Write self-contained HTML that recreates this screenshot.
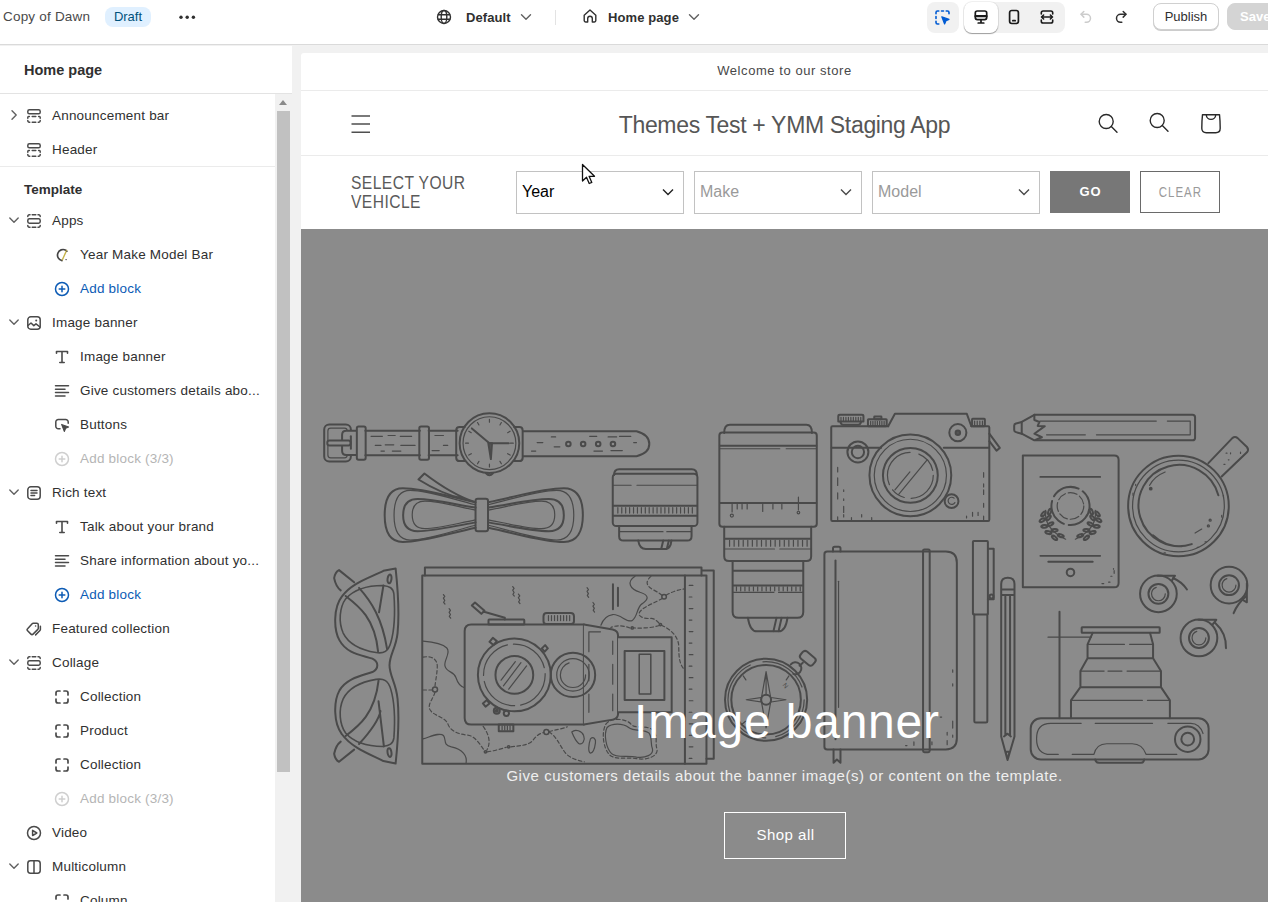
<!DOCTYPE html>
<html lang="en">
<head>
<meta charset="utf-8">
<title>Copy of Dawn - Theme editor</title>
<style>
*{box-sizing:border-box;margin:0;padding:0}
html,body{width:1268px;height:902px;overflow:hidden;background:#f1f1f1;font-family:"Liberation Sans",sans-serif;color:#303030}
body{position:relative}
.abs{position:absolute}
/* top bar */
#topbar{position:absolute;left:0;top:0;width:1268px;height:45px;background:#fff;border-bottom:1px solid #dadada;z-index:5}
#topbar .t{position:absolute;white-space:nowrap;font-size:13px;line-height:16px;color:#303030}
.badge{position:absolute;left:105px;top:7px;width:46px;height:20px;border-radius:8px;background:#e0f0ff;color:#00527c;font-size:13px;line-height:20px;text-align:center}
.btn{position:absolute;background:#fff;border:1px solid #d0d0d0;border-radius:8px;font-size:13px;text-align:center;color:#303030;box-shadow:0 1px 0 #ccc}
/* sidebar */
#side{position:absolute;left:0;top:46px;width:292px;height:856px;background:#fff;overflow:hidden}
#sidehead{position:absolute;left:0;top:0;width:292px;height:48px;border-bottom:1px solid #e3e3e3;background:#fff}
#sidehead b{position:absolute;left:24px;top:15px;font-size:14.500px;line-height:18px;color:#303030}
.row{position:absolute;left:0;height:34px;width:275px;font-size:13.5px;line-height:34px;white-space:nowrap;color:#303030}
.row .lbl{position:absolute;top:0}
.row svg{position:absolute}
.l1 .lbl{left:52px}
.l2 .lbl{left:80px}
.blue .lbl{color:#0c5bb5}
.dis .lbl{color:#b5b5b5}
.sep{position:absolute;left:0;width:275px;height:1px;background:#ebebeb}
#sb{position:absolute;left:275px;top:48px;width:17px;height:808px;background:#f1f1f1}
#sb i{position:absolute;left:2px;top:17px;width:13px;height:661px;background:#c1c1c1}
#sb:before{content:"";position:absolute;left:4px;top:6px;border:4.5px solid transparent;border-bottom:5px solid #8a8a8a;border-top:0}
/* preview */
#pv{position:absolute;left:301px;top:53px;width:967px;height:849px;background:#fff;overflow:hidden;border-radius:3px 0 0 0;font-family:"Liberation Sans",sans-serif;color:#4a4a4a}

.row .lbl{top:1px;letter-spacing:.2px}
#pv .ann{position:absolute;left:0;top:0;width:967px;height:38px;border-bottom:1px solid #ebebeb;text-align:center;font-size:13px;line-height:35px;letter-spacing:.56px;color:#484848}
#pv .hdr{position:absolute;left:0;top:38px;width:967px;height:65px;border-bottom:1px solid #ebebeb}
#pv .title{position:absolute;left:0;top:0;width:967px;text-align:center;font-size:23px;line-height:67px;letter-spacing:-.33px;color:#565656;top:1px;white-space:nowrap}
#pv .ymm{position:absolute;left:0;top:103px;width:967px;height:73px;background:#fff}
#pv .syv{position:absolute;left:50px;top:17px;font-size:18.400px;line-height:19px;letter-spacing:.5px;transform:scaleX(.85);transform-origin:0 0;color:#5a5a5a;white-space:nowrap}
#pv .sel{position:absolute;top:15px;width:168px;height:43px;border:1px solid #c2c2c2;background:#fff;font-size:16px;line-height:39px;padding-left:5px;color:#000}
#pv .sel.ph{color:#9a9a9a}
#pv .sel svg{position:absolute;right:9px;top:16px}
#pv .sel.ph svg{stroke:#4a4a4a}
#pv .go{position:absolute;top:15px;width:80px;height:42px;font-size:13px;line-height:42px;text-align:center;letter-spacing:1.500px}
#banner{position:absolute;left:0;top:176px;width:967px;height:673px;background:#8b8b8b;overflow:hidden}
#banner h2{position:absolute;left:0;width:967px;top:463px;text-align:center;font-weight:normal;font-size:48px;line-height:60px;letter-spacing:.8px;padding-left:5px;color:#fff;white-space:nowrap}
#banner p{position:absolute;left:0;width:967px;top:537px;text-align:center;font-size:15px;line-height:20px;letter-spacing:.55px;color:#efefef;white-space:nowrap}
#banner .shop{position:absolute;left:423px;top:583px;width:122px;height:47px;border:1px solid #fff;color:#fff;font-size:15px;line-height:44px;text-align:center;letter-spacing:.5px;padding-left:1px}
</style>
</head>
<body>
<div id="topbar">
<span class="t" style="left:3px;top:9px;font-size:13.500px;letter-spacing:.2px;color:#4a4a4a">Copy of Dawn</span>
<span class="badge">Draft</span>
<svg class="abs" style="left:178px;top:13px" width="18" height="8" viewBox="0 0 18 8"><circle cx="3" cy="4.300" r="1.700" fill="#303030"/><circle cx="9.200" cy="4.300" r="1.700" fill="#303030"/><circle cx="15.400" cy="4.300" r="1.700" fill="#303030"/></svg>
<svg class="abs" style="left:436px;top:9px" width="16" height="16" viewBox="0 0 16 16" fill="none" stroke="#303030" stroke-width="1.4"><circle cx="8" cy="8" r="6.5"/><ellipse cx="8" cy="8" rx="2.8" ry="6.5"/><path d="M1.8 5.8h12.4M1.8 10.2h12.4"/></svg>
<span class="t" style="left:466px;top:10px;font-weight:bold;font-size:13px;letter-spacing:.1px">Default</span>
<svg class="abs" style="left:520px;top:13px" width="12" height="8" viewBox="0 0 12 8" fill="none" stroke="#616161" stroke-width="1.4" stroke-linecap="round" stroke-linejoin="round"><path d="M1.5 1.8 6 6.2l4.5-4.4"/></svg>
<i class="abs" style="left:555px;top:10px;width:1px;height:15px;background:#e3e3e3"></i>
<svg class="abs" style="left:582px;top:8px" width="16" height="16" viewBox="0 0 16 16" fill="none" stroke="#303030" stroke-width="1.4" stroke-linejoin="round" stroke-linecap="round"><path d="M2.2 7.2 8 2l5.8 5.200v5.300a1.500 1.500 0 0 1-1.500 1.500h-2v-3.500a2.300 2.300 0 0 0-4.600 0v3.500h-2a1.500 1.500 0 0 1-1.500-1.500z"/></svg>
<span class="t" style="left:608px;top:10px;font-weight:bold;font-size:13px;letter-spacing:.1px">Home page</span>
<svg class="abs" style="left:688px;top:13px" width="12" height="8" viewBox="0 0 12 8" fill="none" stroke="#616161" stroke-width="1.4" stroke-linecap="round" stroke-linejoin="round"><path d="M1.500 1.800 6 6.200l4.500-4.400"/></svg>
<i class="abs" style="left:927px;top:2px;width:32px;height:31px;border-radius:8px;background:#f1f1f1"></i>
<svg class="abs" style="left:934px;top:9px" width="17" height="17" viewBox="0 0 17 17" fill="none" stroke="#005bd3" stroke-width="1.600" stroke-linecap="round"><path d="M2 4.800v-1.300a1.500 1.500 0 0 1 1.500-1.500h1.300M7.500 2h2M12.200 2h1.300a1.500 1.500 0 0 1 1.500 1.500v1.300M2 7.500v2M2 12.200v1.300a1.500 1.500 0 0 0 1.500 1.500h1.300"/><path d="M7.800 7.800l7.200 2.600-3 1.400-1.400 3.200z" fill="#005bd3" stroke-width="1.200" stroke-linejoin="round"/></svg>
<i class="abs" style="left:964px;top:2px;width:101px;height:31px;border-radius:8px;background:#f1f1f1"></i>
<i class="abs" style="left:964px;top:2px;width:34px;height:31px;border-radius:8px;background:#fff;box-shadow:0 1px 1px rgba(0,0,0,.35),0 0 0 1px rgba(0,0,0,.06)"></i>
<svg class="abs" style="left:973px;top:9px" width="16" height="16" viewBox="0 0 16 16" fill="none" stroke="#1a1a1a" stroke-width="1.700" stroke-linecap="round" stroke-linejoin="round"><rect x="2.300" y="2" width="11.400" height="8.600" rx="2"/><path d="M2.500 7.200h11" stroke-width="2.200"/><path d="M8 10.800v3M5.200 14h5.600"/></svg>
<svg class="abs" style="left:1006px;top:9px" width="16" height="16" viewBox="0 0 16 16" fill="none" stroke="#1a1a1a" stroke-width="1.700" stroke-linecap="round"><rect x="3.600" y="1.500" width="8.800" height="13" rx="2.200"/><path d="M6.800 11.700h2.400"/></svg>
<svg class="abs" style="left:1039px;top:9px" width="16" height="16" viewBox="0 0 16 16" fill="none" stroke="#1a1a1a" stroke-width="1.600" stroke-linecap="round" stroke-linejoin="round"><path d="M2.300 5V3.800A1.800 1.800 0 0 1 4.100 2h7.800a1.800 1.800 0 0 1 1.800 1.800V5M2.300 11v1.200A1.800 1.800 0 0 0 4.100 14h7.800a1.800 1.800 0 0 0 1.800-1.800V11"/><path d="M2.500 8h11M4.600 6 2.500 8l2.100 2M11.400 6l2.100 2-2.100 2"/></svg>
<svg class="abs" style="left:1078px;top:9px" width="16" height="16" viewBox="0 0 16 16" fill="none" stroke="#cccccc" stroke-width="1.500" stroke-linecap="round" stroke-linejoin="round"><path d="M5.800 2.500 3 5.300l2.800 2.800"/><path d="M3.200 5.300h5.300a4 4 0 0 1 0 8H7.200"/></svg>
<svg class="abs" style="left:1113px;top:9px" width="16" height="16" viewBox="0 0 16 16" fill="none" stroke="#303030" stroke-width="1.500" stroke-linecap="round" stroke-linejoin="round"><path d="M10.200 2.500 13 5.300l-2.800 2.800"/><path d="M12.800 5.300H7.500a4 4 0 0 0 0 8h1.300"/></svg>
<span class="btn" style="left:1153px;top:3px;width:66px;height:27px;line-height:25px">Publish</span>
<span class="btn" style="left:1227px;top:3px;width:60px;height:27px;line-height:25px;background:#d4d4d4;border-color:#d4d4d4;color:#fff;font-weight:bold;box-shadow:none;text-align:left;padding-left:12px">Save</span>
</div>
<div id="side">
<div class="row l1 " style="top:52px"><svg style="left:9px;top:11px" width="10" height="12" viewBox="0 0 10 12" fill="none" stroke="#616161" stroke-width="1.400" stroke-linecap="round" stroke-linejoin="round"><path d="M3 1.800 7.200 6 3 10.200"/></svg><svg style="left:26px;top:10px" width="16" height="16" viewBox="0 0 16 16" fill="none" stroke="#4a4a4a" stroke-width="1.5" stroke-linecap="round" stroke-linejoin="round"><rect x="1.800" y="1.800" width="12.400" height="4" rx="1.600"/><path d="M1.800 10.200V9.400a.8.800 0 0 1 .8-.8h.8M14.200 10.200V9.400a.8.800 0 0 0-.8-.8h-.8M6.200 8.600h3.600M1.800 12.600v.2a1.400 1.400 0 0 0 1.400 1.400h.6M14.200 12.600v.2a1.400 1.400 0 0 1-1.400 1.400h-.6M6.200 14.200h3.600"/></svg><span class="lbl">Announcement bar</span></div>
<div class="row l1 " style="top:86px"><svg style="left:26px;top:10px" width="16" height="16" viewBox="0 0 16 16" fill="none" stroke="#4a4a4a" stroke-width="1.5" stroke-linecap="round" stroke-linejoin="round"><rect x="1.800" y="1.800" width="12.400" height="4" rx="1.600"/><path d="M1.800 10.200V9.400a.8.800 0 0 1 .8-.8h.8M14.200 10.200V9.400a.8.800 0 0 0-.8-.8h-.8M6.200 8.600h3.600M1.800 12.600v.2a1.400 1.400 0 0 0 1.400 1.400h.6M14.200 12.600v.2a1.400 1.400 0 0 1-1.400 1.400h-.6M6.200 14.200h3.600"/></svg><span class="lbl">Header</span></div>
<div class="row l1 " style="top:157px"><svg style="left:8px;top:12px" width="12" height="10" viewBox="0 0 12 10" fill="none" stroke="#616161" stroke-width="1.400" stroke-linecap="round" stroke-linejoin="round"><path d="M1.800 3 6 7.200 10.200 3"/></svg><svg style="left:26px;top:10px" width="16" height="16" viewBox="0 0 16 16" fill="none" stroke="#4a4a4a" stroke-width="1.5" stroke-linecap="round" stroke-linejoin="round"><rect x="1.800" y="5.800" width="12.400" height="4.400" rx="1.600"/><path d="M1.800 3.600V3.200a1.400 1.400 0 0 1 1.400-1.400h.8M14.200 3.600V3.200a1.400 1.400 0 0 0-1.400-1.400h-.8M6.200 1.800h3.600M1.800 12.400v.4a1.400 1.400 0 0 0 1.400 1.400h.8M14.200 12.400v.4a1.400 1.400 0 0 1-1.400 1.400h-.8M6.200 14.200h3.600"/></svg><span class="lbl">Apps</span></div>
<div class="row l2 " style="top:191px"><svg style="left:54px;top:10px" width="16" height="16" viewBox="0 0 16 16" fill="none" stroke="#4a4a4a" stroke-width="1.5" stroke-linecap="round" stroke-linejoin="round"><path d="M11.800 3.200A5.600 5.600 0 1 0 8 13.600" stroke="#444" stroke-width="1.700"/><path d="M12.600 3.400 8.400 12.800" stroke="#c7b44a" stroke-width="1.400"/><path d="M13 4.200v.2M12 12.600h.2" stroke="#444" stroke-width="1.300"/></svg><span class="lbl">Year Make Model Bar</span></div>
<div class="row l2 blue" style="top:225px"><svg style="left:54px;top:10px" width="16" height="16" viewBox="0 0 16 16" fill="none" stroke="#0c5bb5" stroke-width="1.5" stroke-linecap="round" stroke-linejoin="round"><circle cx="8" cy="8" r="6.500"/><path d="M8 5.200v5.600M5.200 8h5.600"/></svg><span class="lbl">Add block</span></div>
<div class="row l1 " style="top:259px"><svg style="left:8px;top:12px" width="12" height="10" viewBox="0 0 12 10" fill="none" stroke="#616161" stroke-width="1.400" stroke-linecap="round" stroke-linejoin="round"><path d="M1.800 3 6 7.200 10.200 3"/></svg><svg style="left:26px;top:10px" width="16" height="16" viewBox="0 0 16 16" fill="none" stroke="#4a4a4a" stroke-width="1.5" stroke-linecap="round" stroke-linejoin="round"><rect x="1.800" y="1.800" width="12.400" height="12.400" rx="3"/><path d="M2 10.500 5 8l2.800 2.600 2.200-1.800 4 3.200"/><circle cx="10.200" cy="5.600" r="1" fill="#4a4a4a" stroke="none"/></svg><span class="lbl">Image banner</span></div>
<div class="row l2 " style="top:293px"><svg style="left:54px;top:10px" width="16" height="16" viewBox="0 0 16 16" fill="none" stroke="#4a4a4a" stroke-width="1.5" stroke-linecap="round" stroke-linejoin="round"><path d="M2.500 4.200V2.500h11v1.700M8 2.500v11M5.800 13.500h4.400" stroke-width="1.600"/></svg><span class="lbl">Image banner</span></div>
<div class="row l2 " style="top:327px"><svg style="left:54px;top:10px" width="16" height="16" viewBox="0 0 16 16" fill="none" stroke="#4a4a4a" stroke-width="1.5" stroke-linecap="round" stroke-linejoin="round"><path d="M1.500 2.800h13M1.500 6.200h9.500M1.500 9.600h13M1.500 13h9.500"/></svg><span class="lbl">Give customers details abo...</span></div>
<div class="row l2 " style="top:361px"><svg style="left:54px;top:10px" width="16" height="16" viewBox="0 0 16 16" fill="none" stroke="#4a4a4a" stroke-width="1.5" stroke-linecap="round" stroke-linejoin="round"><path d="M6 11.800H4.300A2.500 2.500 0 0 1 1.800 9.300V5A2.500 2.500 0 0 1 4.300 2.500h7.400A2.500 2.500 0 0 1 14.200 5v1.200"/><path d="M7.600 7.400l7 2.500-2.900 1.400-1.400 3.100z" fill="#4a4a4a" stroke-width="1.100"/></svg><span class="lbl">Buttons</span></div>
<div class="row l2 dis" style="top:395px"><svg style="left:54px;top:10px" width="16" height="16" viewBox="0 0 16 16" fill="none" stroke="#cfcfcf" stroke-width="1.5" stroke-linecap="round" stroke-linejoin="round"><circle cx="8" cy="8" r="6.500"/><path d="M8 5.200v5.600M5.200 8h5.600"/></svg><span class="lbl">Add block (3/3)</span></div>
<div class="row l1 " style="top:429px"><svg style="left:8px;top:12px" width="12" height="10" viewBox="0 0 12 10" fill="none" stroke="#616161" stroke-width="1.400" stroke-linecap="round" stroke-linejoin="round"><path d="M1.800 3 6 7.200 10.200 3"/></svg><svg style="left:26px;top:10px" width="16" height="16" viewBox="0 0 16 16" fill="none" stroke="#4a4a4a" stroke-width="1.5" stroke-linecap="round" stroke-linejoin="round"><rect x="1.800" y="1.800" width="12.400" height="12.400" rx="3"/><path d="M5 5.400h6M5 8h6M5 10.600h3.600"/></svg><span class="lbl">Rich text</span></div>
<div class="row l2 " style="top:463px"><svg style="left:54px;top:10px" width="16" height="16" viewBox="0 0 16 16" fill="none" stroke="#4a4a4a" stroke-width="1.5" stroke-linecap="round" stroke-linejoin="round"><path d="M2.500 4.200V2.500h11v1.700M8 2.500v11M5.800 13.500h4.400" stroke-width="1.600"/></svg><span class="lbl">Talk about your brand</span></div>
<div class="row l2 " style="top:497px"><svg style="left:54px;top:10px" width="16" height="16" viewBox="0 0 16 16" fill="none" stroke="#4a4a4a" stroke-width="1.5" stroke-linecap="round" stroke-linejoin="round"><path d="M1.500 2.800h13M1.500 6.200h9.500M1.500 9.600h13M1.500 13h9.500"/></svg><span class="lbl">Share information about yo...</span></div>
<div class="row l2 blue" style="top:531px"><svg style="left:54px;top:10px" width="16" height="16" viewBox="0 0 16 16" fill="none" stroke="#0c5bb5" stroke-width="1.5" stroke-linecap="round" stroke-linejoin="round"><circle cx="8" cy="8" r="6.500"/><path d="M8 5.200v5.600M5.200 8h5.600"/></svg><span class="lbl">Add block</span></div>
<div class="row l1 " style="top:565px"><svg style="left:26px;top:10px" width="16" height="16" viewBox="0 0 16 16" fill="none" stroke="#4a4a4a" stroke-width="1.5" stroke-linecap="round" stroke-linejoin="round"><path d="M7.200 2.200h3.600a1.500 1.500 0 0 1 1.500 1.500v3.600a1.500 1.500 0 0 1-.45 1.050l-4.800 4.800a1.500 1.500 0 0 1-2.100 0L1.600 9.800a1.500 1.500 0 0 1 0-2.100l4.550-5.050A1.500 1.500 0 0 1 7.200 2.200z"/><path d="M14.400 5.200v3.300a1.500 1.500 0 0 1-.45 1.050L9.600 13.900"/><circle cx="9.600" cy="5" r=".8" fill="#4a4a4a" stroke="none"/></svg><span class="lbl">Featured collection</span></div>
<div class="row l1 " style="top:599px"><svg style="left:8px;top:12px" width="12" height="10" viewBox="0 0 12 10" fill="none" stroke="#616161" stroke-width="1.400" stroke-linecap="round" stroke-linejoin="round"><path d="M1.800 3 6 7.200 10.200 3"/></svg><svg style="left:26px;top:10px" width="16" height="16" viewBox="0 0 16 16" fill="none" stroke="#4a4a4a" stroke-width="1.5" stroke-linecap="round" stroke-linejoin="round"><rect x="1.800" y="5.800" width="12.400" height="4.400" rx="1.600"/><path d="M1.800 3.600V3.200a1.400 1.400 0 0 1 1.400-1.400h.8M14.200 3.600V3.200a1.400 1.400 0 0 0-1.400-1.400h-.8M6.200 1.800h3.600M1.800 12.400v.4a1.400 1.400 0 0 0 1.400 1.400h.8M14.200 12.400v.4a1.400 1.400 0 0 1-1.400 1.400h-.8M6.200 14.200h3.600"/></svg><span class="lbl">Collage</span></div>
<div class="row l2 " style="top:633px"><svg style="left:54px;top:10px" width="16" height="16" viewBox="0 0 16 16" fill="none" stroke="#4a4a4a" stroke-width="1.5" stroke-linecap="round" stroke-linejoin="round"><path d="M2 6V4A2 2 0 0 1 4 2h2M10 2h2A2 2 0 0 1 14 4v2M14 10v2a2 2 0 0 1-2 2h-2M6 14H4A2 2 0 0 1 2 12v-2" stroke-width="1.700"/></svg><span class="lbl">Collection</span></div>
<div class="row l2 " style="top:667px"><svg style="left:54px;top:10px" width="16" height="16" viewBox="0 0 16 16" fill="none" stroke="#4a4a4a" stroke-width="1.5" stroke-linecap="round" stroke-linejoin="round"><path d="M2 6V4A2 2 0 0 1 4 2h2M10 2h2A2 2 0 0 1 14 4v2M14 10v2a2 2 0 0 1-2 2h-2M6 14H4A2 2 0 0 1 2 12v-2" stroke-width="1.700"/></svg><span class="lbl">Product</span></div>
<div class="row l2 " style="top:701px"><svg style="left:54px;top:10px" width="16" height="16" viewBox="0 0 16 16" fill="none" stroke="#4a4a4a" stroke-width="1.5" stroke-linecap="round" stroke-linejoin="round"><path d="M2 6V4A2 2 0 0 1 4 2h2M10 2h2A2 2 0 0 1 14 4v2M14 10v2a2 2 0 0 1-2 2h-2M6 14H4A2 2 0 0 1 2 12v-2" stroke-width="1.700"/></svg><span class="lbl">Collection</span></div>
<div class="row l2 dis" style="top:735px"><svg style="left:54px;top:10px" width="16" height="16" viewBox="0 0 16 16" fill="none" stroke="#cfcfcf" stroke-width="1.5" stroke-linecap="round" stroke-linejoin="round"><circle cx="8" cy="8" r="6.500"/><path d="M8 5.200v5.600M5.200 8h5.600"/></svg><span class="lbl">Add block (3/3)</span></div>
<div class="row l1 " style="top:769px"><svg style="left:26px;top:10px" width="16" height="16" viewBox="0 0 16 16" fill="none" stroke="#4a4a4a" stroke-width="1.5" stroke-linecap="round" stroke-linejoin="round"><circle cx="8" cy="8" r="6.500"/><path d="M6.600 5.400v5.200L10.800 8z"/></svg><span class="lbl">Video</span></div>
<div class="row l1 " style="top:803px"><svg style="left:8px;top:12px" width="12" height="10" viewBox="0 0 12 10" fill="none" stroke="#616161" stroke-width="1.400" stroke-linecap="round" stroke-linejoin="round"><path d="M1.800 3 6 7.200 10.200 3"/></svg><svg style="left:26px;top:10px" width="16" height="16" viewBox="0 0 16 16" fill="none" stroke="#4a4a4a" stroke-width="1.5" stroke-linecap="round" stroke-linejoin="round"><rect x="1.800" y="1.800" width="12.400" height="12.400" rx="2.600"/><path d="M8 2v12"/></svg><span class="lbl">Multicolumn</span></div>
<div class="row l2 " style="top:837px"><svg style="left:54px;top:10px" width="16" height="16" viewBox="0 0 16 16" fill="none" stroke="#4a4a4a" stroke-width="1.5" stroke-linecap="round" stroke-linejoin="round"><path d="M2 6V4A2 2 0 0 1 4 2h2M10 2h2A2 2 0 0 1 14 4v2M14 10v2a2 2 0 0 1-2 2h-2M6 14H4A2 2 0 0 1 2 12v-2" stroke-width="1.700"/></svg><span class="lbl">Column</span></div>
<i class="sep" style="top:120px"></i>
<b class="abs" style="left:24px;top:136px;font-size:13.5px;line-height:16px;color:#303030">Template</b>
<div id="sidehead"><b>Home page</b></div><div id="sb"><i></i></div></div>
<div id="pv">
<div class="ann">Welcome to our store</div>
<div class="hdr">
<svg class="abs" style="left:50px;top:23px" width="20" height="21" viewBox="0 0 20 21" stroke="#4f4f4f" stroke-width="1.500"><path d="M.5 1.700h18.500M.5 9.900h18.500M.5 18.100h18.500" transform="translate(0,.2)"/></svg>
<div class="title">Themes Test + YMM Staging App</div>
<svg class="abs" style="left:795px;top:21px" width="24" height="24" viewBox="0 0 24 24" fill="none" stroke="#2a2a2a" stroke-width="1.400" stroke-linecap="round"><circle cx="10.200" cy="9.500" r="7"/><path d="M15.300 14.600 21 20.300"/></svg>
<svg class="abs" style="left:846px;top:20px" width="24" height="24" viewBox="0 0 24 24" fill="none" stroke="#2a2a2a" stroke-width="1.400" stroke-linecap="round"><circle cx="10.200" cy="9.500" r="7"/><path d="M15.300 14.600 21 20.300"/></svg>
<svg class="abs" style="left:898px;top:21px" width="24" height="24" viewBox="0 0 24 24" fill="none" stroke="#2a2a2a" stroke-width="1.400" stroke-linejoin="round"><path d="M3.500 2.700h17c.5 4.500.7 9 .7 13.500 0 3-1.500 4.500-4.500 4.500H7.300c-3 0-4.500-1.500-4.500-4.500 0-4.500.2-9 .7-13.500z"/><path d="M7.300 2.700a4.700 4.700 0 0 0 9.400 0"/></svg>
</div>
<div class="ymm">
<div class="syv">SELECT YOUR<br>VEHICLE</div>
<div class="sel" style="left:215px">Year<svg width="12" height="8" viewBox="0 0 12 8" fill="none" stroke="#222" stroke-width="1.400"><path d="M1 1.500 6 6.500 11 1.500"/></svg></div>
<div class="sel ph" style="left:393px">Make<svg width="12" height="8" viewBox="0 0 12 8" fill="none" stroke="#222" stroke-width="1.400"><path d="M1 1.500 6 6.500 11 1.500"/></svg></div>
<div class="sel ph" style="left:571px">Model<svg width="12" height="8" viewBox="0 0 12 8" fill="none" stroke="#222" stroke-width="1.400"><path d="M1 1.500 6 6.500 11 1.500"/></svg></div>
<div class="go" style="left:749px;background:#777;color:#fff;font-weight:bold;font-size:13px;letter-spacing:1px;padding-left:1px">GO</div>
<div class="go" style="left:839px;border:1px solid #6a6a6a;color:#9a9a9a;line-height:40px;font-size:14px;letter-spacing:1.200px"><span style="display:inline-block;transform:scaleX(.82);margin-left:1px">CLEAR</span></div>
</div>
<div id="banner">
<!--ARTS--><svg class="abs" style="left:0;top:0" width="967" height="673" viewBox="301 229 967 673" fill="none" stroke="#4a4a4a" stroke-width="2" stroke-linecap="round" stroke-linejoin="round"><style>#art *{vector-effect:non-scaling-stroke}</style><g id="art"><g transform="translate(310 400) scale(0.28393)"><rect x="50" y="86" width="94" height="131" rx="18" /><g stroke-width="1.2"><rect x="63" y="99" width="68" height="105" rx="10" /></g><path d="M165 108H128q-15 0-15 15v56q0 15 15 15H165" fill="#8b8b8b"/><rect x="61" y="143" width="82" height="17" rx="8" fill="#8b8b8b"/><path d="M144 128V172"/><rect x="165" y="93" width="31" height="117" rx="6" fill="#8b8b8b"/><path d="M195 108H387M195 195H387M418 108H520M418 195H520"/><rect x="385" y="93" width="34" height="117" rx="6" /><path d="M545 95h-18q-12 0-12 12v96q0 12 12 12h18M719 95h18q12 0 12 12v96q0 12-12 12h-18"/><circle cx="632" cy="152" r="105" /><g stroke-width="1.2"><circle cx="632" cy="152" r="93" /></g><path d="M632 152 570 100M632 152H700" /><path d="M628 152l9 56 4-56z" fill="#555"/><g stroke-width="1.2"><path d="M632.0 78.0L632.0 68.0M669.0 87.9L674.0 79.3M696.1 115.0L704.7 110.0M706.0 152.0L716.0 152.0M696.1 189.0L704.7 194.0M669.0 216.1L674.0 224.7M632.0 226.0L632.0 236.0M595.0 216.1L590.0 224.7M567.9 189.0L559.3 194.0M558.0 152.0L548.0 152.0M567.9 115.0L559.3 110.0M595.0 87.9L590.0 79.3"/></g><path d="M620 258q12 14 24 0"/><path d="M750 110H1150q45 12 45 45q0 32-45 43H750"/><circle cx="910" cy="155" r="8" /><circle cx="962" cy="155" r="8" /><circle cx="1015" cy="155" r="8" /><circle cx="1067" cy="155" r="8" /><path stroke-width="1.2" d="M215 128h40M275 125h25M318 128h40M230 160h20M265 158h30M320 160h50M250 180h12M290 180h30M440 125h30M430 178h25M470 160h15M800 150h20M850 130h15M860 165h20M985 128h25M1050 130h30M1090 128h40M1000 180h30M1060 178h40M1140 150h10M780 180h15" stroke-dasharray="none"/><path stroke-width="2" d="M583 360C481 338 397 311 327 311C282 311 263 349 263 406C263 462 282 500 327 500C397 500 481 472 583 450"/><path stroke-width="1.2" d="M583 369C491 346 417 318 353 318C313 318 296 353 296 406C296 458 313 493 353 493C417 493 491 464 583 441"/><path stroke-width="2" d="M583 379C501 366 435 349 379 349C343 349 328 372 328 406C328 439 343 462 379 462C435 462 501 445 583 431"/><path stroke-width="1.2" d="M583 388C512 374 454 356 405 356C373 356 360 375 360 404C360 434 373 453 405 453C454 453 512 436 583 422"/><path stroke-width="2" d="M628 360C735 338 821 311 894 311C941 311 961 349 961 406C961 462 941 500 894 500C821 500 735 472 628 450"/><path stroke-width="1.2" d="M628 369C724 346 803 318 869 318C911 318 929 353 929 406C929 458 911 493 869 493C803 493 724 464 628 441"/><path stroke-width="2" d="M628 379C713 366 782 349 841 349C878 349 894 372 894 406C894 439 878 462 841 462C782 462 713 445 628 431"/><path stroke-width="1.2" d="M628 388C703 374 764 356 815 356C848 356 862 375 862 404C862 434 848 453 815 453C764 453 703 436 628 422"/><rect x="583" y="348" width="44" height="114" rx="8" /><path d="M538 347C480 335 430 310 382 280L403 259C450 295 520 340 582 360"/></g>
<g transform="translate(600 410) scale(0.25504)"><path d="M55 255q0-23 20-23h285q20 0 20 23"/><rect x="50" y="250" width="332" height="205" rx="14" /><path d="M52 375h328M52 415h328"/><g stroke-width="1.2"><path d="M52 295h70M145 295h235"/><path d="M70.0 383V404M85.4 383V404M100.7 383V404M116.1 383V404M131.5 383V404M146.8 383V404M162.2 383V404M177.6 383V404M192.9 383V404M208.3 383V404M223.7 383V404M239.1 383V404M254.4 383V404M269.8 383V404M285.2 383V404M300.5 383V404M315.9 383V404M331.3 383V404M346.6 383V404M362.0 383V404"/></g><path d="M75 455v40q0 17 17 17h250q17 0 17-17v-40"/><g stroke-width="1.2"><path d="M77 477h170M262 477h95"/></g><path d="M150 512q5 33 30 33h75q22 0 25-33M240 545l8-33M262 545l8-33"/><path d="M487 90q0-32 22-32h300q22 0 22 32"/><rect x="468" y="88" width="382" height="370" rx="12" /><path d="M470 140h378M470 365h378"/><g stroke-width="1.2"><path d="M470 152h235M730 152h118M518 370v30M538 370v18M557 370v18M577 370v18M638 370v28M678 370v18M713 370v18M778 342v50"/><circle cx="517" cy="414" r="6" /><circle cx="778" cy="402" r="5" /></g><path d="M487 458v115q0 19 19 19h303q19 0 19-19v-115M489 505h338"/><g stroke-width="1.2"><path d="M489 545h195M705 545h122"/><path d="M508.0 511V534M525.9 511V534M543.8 511V534M561.6 511V534M579.5 511V534M597.4 511V534M615.3 511V534M633.2 511V534M651.1 511V534M668.9 511V534M686.8 511V534M704.7 511V534M722.6 511V534M740.5 511V534M758.4 511V534M776.2 511V534M794.1 511V534M812.0 511V534"/></g><path d="M520 592v200q0 23 23 23h231q23 0 23-23v-200M522 630h273M522 688h273"/><g stroke-width="1.2"><path d="M522 715h160M700 715h95"/><path d="M535.0 693V709M551.7 693V709M568.3 693V709M585.0 693V709M601.7 693V709M618.3 693V709M635.0 693V709M651.7 693V709M668.3 693V709M685.0 693V709M701.7 693V709M718.3 693V709M735.0 693V709M751.7 693V709M768.3 693V709M785.0 693V709"/></g><path d="M580 815q8 53 35 53h85q28 0 35-53M680 868l12-53M700 868l12-53"/></g>
<g transform="translate(820 400) scale(0.14984)"><path d="M455 175 500 92H980L1010 175"/><path d="M455 175H83q-8 0-8 8V800q0 8 8 8H1122q8 0 8-8V183q0-8-8-8H1010"/><path d="M78 318H408M826 318H1128"/><path d="M122 108q0-10 10-10h148q10 0 10 10v35H122zM135 143q5 22 20 22h100q15 0 20-22"/><g stroke-width="1.2"><path d="M140.0 115V140M156.5 115V140M173.0 115V140M189.5 115V140M206.0 115V140M222.5 115V140M239.0 115V140M255.5 115V140M272.0 115V140"/></g><rect x="320" y="128" width="125" height="47" rx="4" /><g stroke-width="1.2"><path d="M338.0 142V172M353.0 142V172M368.0 142V172M383.0 142V172M398.0 142V172M413.0 142V172M428.0 142V172"/></g><rect x="362" y="110" width="48" height="18" rx="3" /><rect x="1015" y="125" width="85" height="50" rx="4" /><g stroke-width="1.2"><path d="M1032.0 140V172M1049.3 140V172M1066.7 140V172M1084.0 140V172"/></g><circle cx="603" cy="503" r="273" /><circle cx="603" cy="503" r="183" /><g stroke-width="1.2"><circle cx="603" cy="503" r="241" /></g><g stroke-width="1.2"><circle cx="603" cy="503" r="153" stroke-dasharray="35 7 14 6 45 9 22 6"/></g><circle cx="253" cy="347" r="70" /><circle cx="253" cy="347" r="41" /><circle cx="920" cy="218" r="57" /><circle cx="920" cy="218" r="15" fill="#555"/><circle cx="878" cy="675" r="46" /><path stroke-width="1.2" d="M895 655a24 24 0 1 0 5 30"/><path d="M1130 225 1200 320 1178 338 1130 275"/><path stroke-width="1.2" d="M500 600 600 480M525 630 715 400"/><path stroke-width="1.2" d="M118 450v30M118 520v50M118 620v40M118 780v25M158 600v10M158 660v10M158 710v40M158 765v15M210 785v15M278 765v15M345 785v15M1092 485v30M1092 560v20M1092 600v30M1092 690v25M1092 775v25M1055 750v20M1018 750v25M978 775v12"/></g>
<g transform="translate(1000 400) scale(0.22168)"><path d="M155 67H868q12 0 12 12v91q0 12-12 12H155L98 152 72 145q-8-2-8-10V116q0-8 8-10L98 99z"/><path d="M98 99V152M155 67V90L178 99 170 117 202 118 155 152 189 168 162 179"/><path stroke-width="1.2" d="M180 95H705M755 95H858V157H435M385 157H210"/><path d="M103 250H515q20 0 20 20V825q0 20-20 20H103z"/><path d="M182 347H452M182 703H452" stroke-width="1.8"/><path d="M218 730H418"/><circle cx="318" cy="778" r="17" /><circle cx="318" cy="478" r="86" stroke-dasharray="48 5 28 5 28 6" transform="rotate(-50 318 478)"/><circle cx="318" cy="478" r="60" stroke-dasharray="9 3" stroke-width="1.2"/><path stroke-width="1.2" d="M206 498Q196 580 296 628"/><ellipse cx="196" cy="514" rx="14" ry="6" transform="rotate(-50 196 514)"/><ellipse cx="224" cy="504" rx="14" ry="6" transform="rotate(-70 224 504)"/><ellipse cx="191" cy="542" rx="14" ry="6" transform="rotate(-28 191 542)"/><ellipse cx="219" cy="532" rx="14" ry="6" transform="rotate(-48 219 532)"/><ellipse cx="200" cy="570" rx="14" ry="6" transform="rotate(-6 200 570)"/><ellipse cx="228" cy="560" rx="14" ry="6" transform="rotate(-26 228 560)"/><ellipse cx="218" cy="598" rx="14" ry="6" transform="rotate(16 218 598)"/><ellipse cx="246" cy="588" rx="14" ry="6" transform="rotate(-4 246 588)"/><ellipse cx="246" cy="622" rx="14" ry="6" transform="rotate(38 246 622)"/><ellipse cx="274" cy="612" rx="14" ry="6" transform="rotate(18 274 612)"/><g transform="translate(636 0) scale(-1 1)"><path stroke-width="1.2" d="M206 498Q196 580 296 628"/><ellipse cx="196" cy="514" rx="14" ry="6" transform="rotate(-50 196 514)"/><ellipse cx="224" cy="504" rx="14" ry="6" transform="rotate(-70 224 504)"/><ellipse cx="191" cy="542" rx="14" ry="6" transform="rotate(-28 191 542)"/><ellipse cx="219" cy="532" rx="14" ry="6" transform="rotate(-48 219 532)"/><ellipse cx="200" cy="570" rx="14" ry="6" transform="rotate(-6 200 570)"/><ellipse cx="228" cy="560" rx="14" ry="6" transform="rotate(-26 228 560)"/><ellipse cx="218" cy="598" rx="14" ry="6" transform="rotate(16 218 598)"/><ellipse cx="246" cy="588" rx="14" ry="6" transform="rotate(-4 246 588)"/><ellipse cx="246" cy="622" rx="14" ry="6" transform="rotate(38 246 622)"/><ellipse cx="274" cy="612" rx="14" ry="6" transform="rotate(18 274 612)"/></g><path stroke-width="1.2" d="M460 828h8M490 822h6M515 770v12M500 795h5M512 760v3"/><circle cx="805" cy="478" r="227" /><g stroke-width="1.2"><circle cx="805" cy="478" r="207" /></g><path d="M985 430a183 183 0 1 0-120 220M690 610a183 183 0 0 0 130 50"/><path d="M940 285 1048 172q12-10 24 0l42 40q10 12 0 24L1000 345"/><path stroke-width="1.2" d="M675 385q20-40 70-60M880 600l30-18" /><circle cx="680" cy="400" r="4" fill="#555"/><circle cx="948" cy="542" r="3"/><circle cx="940" cy="568" r="3"/><path stroke-width="1.2" d="M1020 240h4M1040 238v5M1085 235v6M1010 290h5M1030 270h3M600 420v10M612 380v6M1008 430v8M1000 520v8M890 665h6M925 640h6M740 690h6"/></g>
<g transform="translate(1020 550) scale(0.25491)"><circle cx="543" cy="172" r="72" /><circle cx="543" cy="172" r="39" /><g stroke-width="1.2"><circle cx="543" cy="172" r="27" stroke-dasharray="30 13"/></g><path d="M540 101h68l-12 18M600 110q35 15 55 45"/><circle cx="820" cy="138" r="72" /><circle cx="820" cy="138" r="39" /><g stroke-width="1.2"><circle cx="820" cy="138" r="27" stroke-dasharray="30 13"/></g><path d="M890 130v75l-18-10M888 180q-35 30-50 68"/><circle cx="702" cy="345" r="72" /><circle cx="702" cy="345" r="39" /><g stroke-width="1.2"><circle cx="702" cy="345" r="27" stroke-dasharray="30 13"/></g><path d="M700 274h70l-14 18M765 285q45 40 43 100"/><rect x="242" y="303" width="306" height="22" rx="2" /><path d="M285 325 265 370V425M510 325 522 370V425M265 425H522M265 425 237 475V538M522 425 553 475V538M237 538H553M237 538 200 590V660M553 538 588 590V660"/><path stroke-width="1.2" d="M267 370H410M430 370H520M239 475H330M345 475H400M420 475H551M202 590H480M500 590H586"/><path d="M155 242V660"/><path stroke-width="1.2" d="M110 342H280"/><rect x="42" y="660" width="698" height="162" rx="40" /><path stroke-width="1.2" d="M150 802H120q-55 0-55-62q0-60 55-60h120M295 680H520M580 680h90q35 0 48 40M205 802h85q10-42 50-42h100q40 0 55 42h120"/><circle cx="658" cy="742" r="50" /><circle cx="658" cy="742" r="25" /><path d="M295 822q3 13 15 13h165q10 0 12-13"/></g>
<g transform="translate(810 530) scale(0.27709)"><path d="M62 78H490q40 0 40 40V752q0 40-40 40H62q-10 0-10-10V88q0-10 10-10z"/><rect x="408" y="70" width="24" height="732" rx="5" /><path d="M92 110V755"/><path stroke-width="1.2" d="M103 185V640"/><path d="M83 78V66q0-6 6-6h15q6 0 6 6v12M85 792v48l12-12 13 12v-48"/><path stroke-width="1.2" d="M515 505v8M515 555v8M515 690v25M515 740v8M495 730v10M495 760v15M470 675h5M440 765v10M375 765v12M345 778h5"/><rect x="588" y="40" width="54" height="265" rx="3" /><path d="M642 68h21V250h-21M593 305V690q0 5 5 5h37q5 0 5-5V305"/><circle cx="655" cy="240" r="7" /><path d="M690 745V195q0-23 24-23q24 0 24 23V745L713 830zM690 215h48M690 235h48M705 240V740M722 240V740M700 745l13-10 12 10M706 800l7 30 7-30z"/></g>
<g transform="translate(410 555) scale(0.33124)"><path d="M45 62V38H880V62M880 47H917V615H895"/><rect x="37" y="62" width="858" height="568" rx="0" /><path d="M830 62V630"/><path stroke-width="1.2" d="M843 92.0h11M843 126.8h8M843 161.6h11M843 196.4h8M843 231.2h11M843 266.0h8M843 300.8h11M843 335.6h8M843 370.4h11M843 405.2h8M843 440.0h11M843 474.8h8M843 509.6h11M843 544.4h8M843 579.2h11M843 614.0h8"/></g>
<g transform="translate(415 565) scale(0.22727)"><path stroke-width="1.2" d="M35 335C70 338 120 345 140 365C160 385 125 420 132 445C140 475 170 465 180 495C188 520 200 535 218 540"/><path stroke-width="1.2" d="M35 765C70 755 110 735 125 750C140 770 120 790 160 800C210 810 230 840 225 870"/><path stroke-width="1.2" d="M968 50C930 75 945 105 990 120C1030 132 1030 150 1000 170C975 185 980 230 955 245C930 255 905 215 870 218C840 222 825 245 818 265"/><path stroke-width="1.2" d="M690 735c15-15 45-5 52 15c8 20-5 45-22 35c-15-12-22-30-30-50zM772 765c12-12 25-2 22 18c-3 22-8 45-22 45c-12-5-8-40 0-63z"/><path stroke-width="1.2" d="M845 715c20-20 70-20 95 0c25 20 70 5 90 25c15 20 5 50 15 70c5 25-30 40-70 35c-40-8-90 5-110-15c-25-25-35-85-20-115z"/><path stroke-width="1.2" stroke-dasharray="3.5 2.5" d="M35 405C70 400 100 410 98 450C96 490 88 520 88 537M88 559C80 590 55 610 65 635C80 665 130 665 145 700C155 730 190 745 230 748C265 752 285 790 305 815M300 710C325 745 335 780 316 815M35 550H77M318 822C350 818 380 808 402 802M422 800C460 795 500 795 520 770C535 750 550 740 567 737M589 735C620 750 635 790 660 825C680 850 715 860 745 866M589 733C620 725 650 720 670 712M1038 50C1010 75 1020 95 1050 110C1065 118 1078 125 1086 133M1105 133C1130 118 1160 108 1185 105M1088 147C1060 165 1010 180 990 205C975 225 1005 238 1040 235C1055 235 1068 250 1076 258M1075 266C1040 278 1000 278 966 277M946 277C920 268 890 262 862 275M1084 265C1120 280 1155 310 1160 350C1162 390 1158 430 1185 460M840 700c20-30 90-25 110 0c20 25 75 0 100 30c20 25 5 55 15 80c5 30-40 50-90 42c-45-8-95 8-120-18c-28-30-35-100-15-134z"/><circle cx="88" cy="548" r="11" stroke-width="1.5"/><circle cx="578" cy="735" r="11" stroke-width="1.5"/><circle cx="1096" cy="140" r="10" stroke-width="1.5"/><circle cx="310" cy="822" r="5" stroke-width="1.5"/><circle cx="412" cy="800" r="5" stroke-width="1.5"/><circle cx="1080" cy="262" r="5" stroke-width="1.5"/><circle cx="956" cy="277" r="5" stroke-width="1.5"/><path stroke-width="1.2" d="M125 130l6 8-6 8 6 10-5 8 6 8"/><path stroke-width="1.2" d="M150 192l6 8-6 8 6 10-5 8 6 8"/><path stroke-width="1.2" d="M430 95l6 8-6 8 6 10-5 8 6 8"/><path stroke-width="1.2" d="M455 128l6 8-6 8 6 10-5 8 6 8"/><path stroke-width="1.2" d="M757 100l6 8-6 8 6 10-5 8 6 8"/><path stroke-width="1.2" d="M783 165l6 8-6 8 6 10-5 8 6 8"/><path d="M871 85V195M893 100V180"/></g>
<g transform="translate(410 555) scale(0.33124)"><path d="M185 210H525V512H185q-20 0-20-20V230q0-20 20-20z" fill="#8b8b8b"/><path d="M525 210 612 225q16 4 16 18V480q0 14-16 17L525 512" fill="#8b8b8b"/><path d="M628 248H790V475H628" fill="#8b8b8b"/><rect x="648" y="290" width="120" height="148" rx="0" /><rect x="692" y="300" width="35" height="120" rx="0" stroke-width="1.500"/><path stroke-width="1.2" d="M540 232h35M540 232v60M540 330v50M540 420v55M612 260v40M612 330v60M612 420v50"/><circle cx="315" cy="362" r="110" /><circle cx="315" cy="362" r="93" stroke-dasharray="42 6" stroke-width="1.2"/><circle cx="315" cy="362" r="57" /><path stroke-width="1.2" d="M282 395 335 325M298 405 352 335M275 378 318 322"/><circle cx="492" cy="362" r="67" /><g stroke-width="1.2"><circle cx="492" cy="362" r="49" /></g><circle cx="492" cy="362" r="38" stroke-dasharray="55 24" stroke-width="1.2"/><path d="M403 200v-15q0-10 10-10h72q10 0 10 10v15q0 8-8 8h-76q-8 0-8-8z"/><g stroke-width="1.2"><path d="M418.0 183V198M427.1 183V198M436.3 183V198M445.4 183V198M454.6 183V198M463.7 183V198M472.9 183V198M482.0 183V198"/></g><rect x="237" y="195" width="108" height="15" rx="2" /><path d="M186.600 152.300l9.600-8.900 28.800 24.700-9.600 9.600zM221 170.800l65.200 18.500v5.700"/><rect x="268" y="512" width="44" height="20" rx="0" /><g stroke-width="1.2"><path d="M278.0 516V528M286.0 516V528M294.0 516V528M302.0 516V528"/></g><path d="M240 262l10-12 12 10-10 12zM398 282l10-10 8 10-10 10zM220 448l12-10 8 10-12 10z"/><circle cx="262" cy="470" r="9" /><circle cx="262" cy="470" r="3" /><circle cx="291" cy="478" r="8" /><circle cx="1075" cy="437" r="124" /><circle cx="1075" cy="437" r="115" stroke-width="1.2" stroke-dasharray="50 10 30 7 66 13 50 13"/><circle cx="1075" cy="437" r="105" /><path stroke-width="1.2" d="M1075 352 1060 437 1075 522 1090 437zM1015 437 1075 428 1135 437 1075 446zM1075 352V437"/><circle cx="1075" cy="437" r="15" fill="#8b8b8b"/><path d="M1147 352a18 18 0 0 1 36 0 18 18 0 0 1-12 17" transform="rotate(40 1167 341) translate(0 -8)"/><path d="M1176 334l10-9"/><rect x="1177" y="298" width="48" height="28" rx="9" transform="rotate(40 1201 312)"/><path stroke-width="1.2" d="M1006 365l8 12M1144 365l-8 12M1003 510l10-8"/><text x="1128" y="395" font-size="20" font-family="Liberation Sans,sans-serif" fill="#4a4a4a" stroke="none" transform="rotate(50 1128 390)">N</text></g>
<g transform="translate(320 555) scale(0.24390)"><path d="M260 65 310 55C318 130 325 250 318 320C312 380 285 410 285 452C285 495 312 525 318 590C325 660 318 780 310 855L260 845C200 815 130 790 90 735C55 690 55 600 80 555C110 505 170 495 215 480Q235 470 235 452Q235 435 215 425C170 410 110 405 80 350C55 305 55 215 90 170C130 115 200 95 260 65z"/><path stroke-width="1.6" d="M258 125C285 128 300 135 303 160C308 230 305 310 290 360C280 395 262 405 230 400C170 390 120 370 95 320C75 275 80 215 105 180C140 140 200 125 258 125z"/><path stroke-width="1.6" d="M258 785C285 782 300 775 303 750C308 680 305 600 290 550C280 515 262 505 230 510C170 520 120 540 95 590C75 635 80 695 105 730C140 770 200 785 258 785z"/><path d="M140 112 78 62Q62 70 58 95Q65 130 85 145"/><path d="M160 135C210 190 255 260 275 385M105 168C160 210 225 260 238 395M260 125 242 235"/><path d="M140 798 78 848Q62 840 58 815Q65 780 85 765"/><path d="M160 775C210 720 240 680 248 640M105 742C160 700 225 650 240 515M262 785 240 600"/><ellipse cx="285" cy="98" rx="8" ry="18" transform="rotate(8 285 98)"/><ellipse cx="285" cy="810" rx="8" ry="18" transform="rotate(-8 285 810)"/></g></g></svg><!--ARTE-->
<h2>Image banner</h2>
<p>Give customers details about the banner image(s) or content on the template.</p>
<div class="shop">Shop all</div>
</div>
<svg class="abs" style="left:280px;top:110px" width="16" height="24" viewBox="0 0 16 24"><path d="M1.500 1.500v16.500l4-3.700 2.700 6.200 2.600-1.100-2.700-6.100h5.400z" fill="#fff" stroke="#111" stroke-width="1.300" stroke-linejoin="round"/></svg>
</div>
</body>
</html>
